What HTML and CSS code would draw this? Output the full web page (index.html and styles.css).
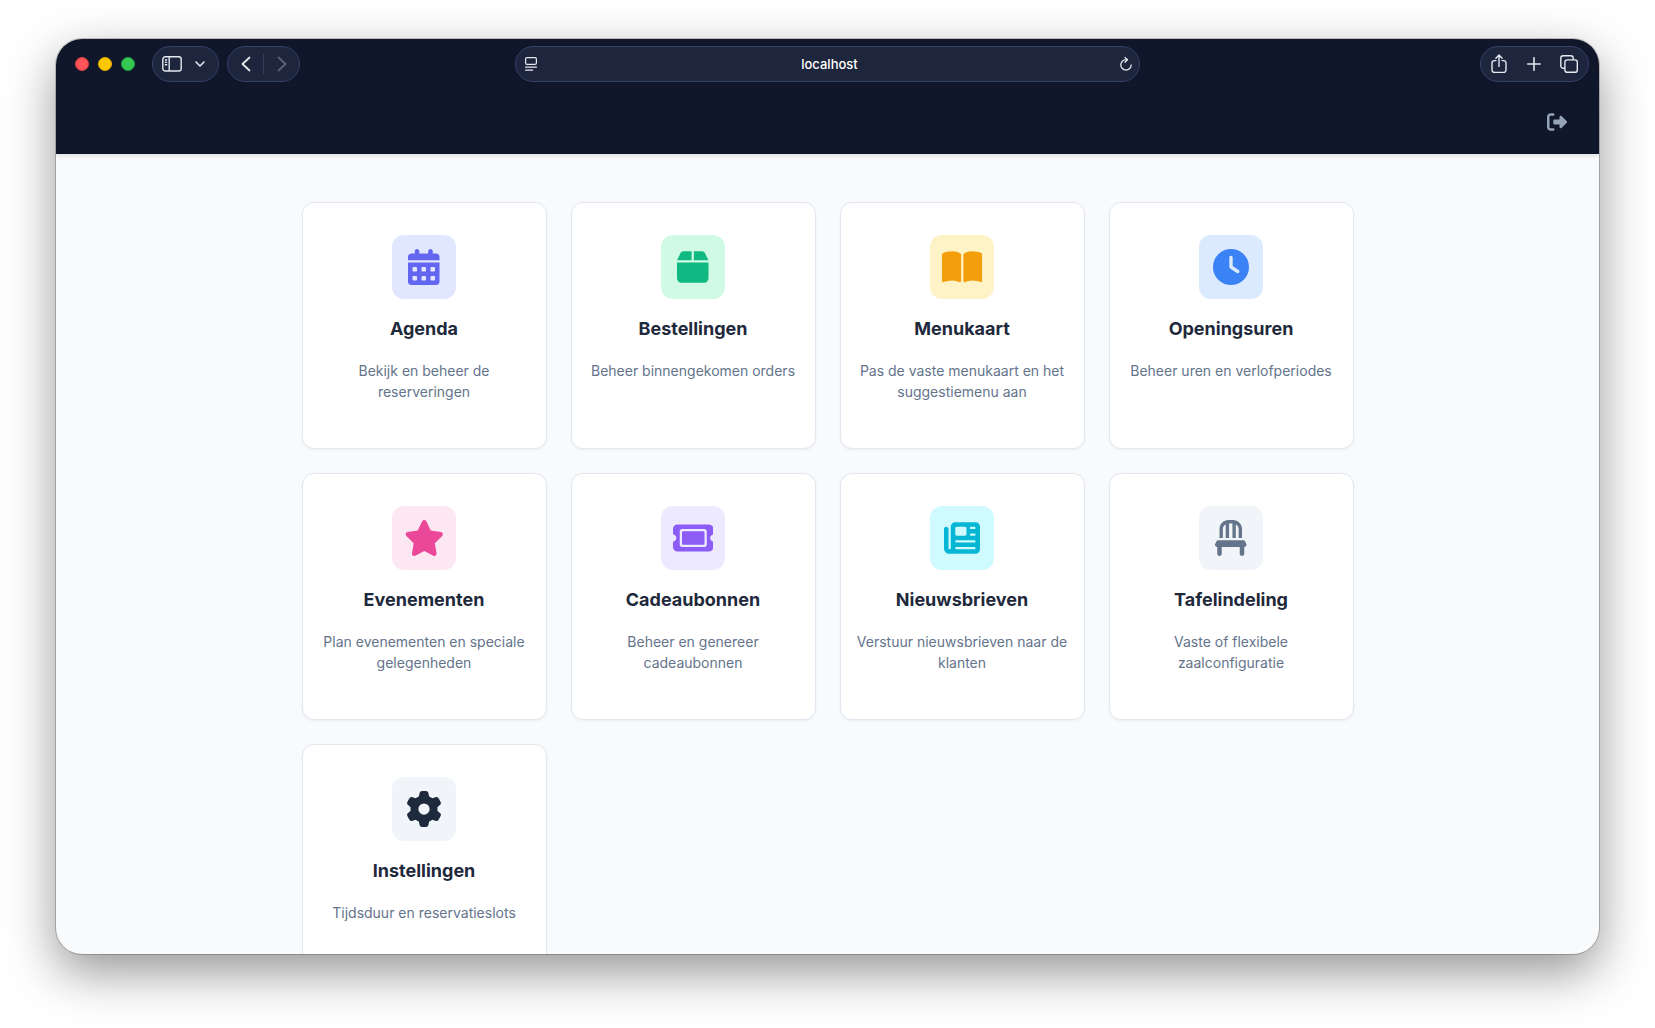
FILE: index.html
```html
<!DOCTYPE html>
<html lang="nl">
<head>
    <meta charset="UTF-8">
    <meta name="viewport" content="width=device-width, initial-scale=1.0">
    <title>Dashboard</title>
    <link rel="stylesheet" href="styles.css">
</head>
<body>
    <div class="window">
        <!-- Browser toolbar -->
        <div class="toolbar">
            <div class="toolbar-left">
                <div class="lights">
                    <span class="light red"></span>
                    <span class="light yellow"></span>
                    <span class="light green"></span>
                </div>
                <div class="pill pill-sidebar">
                    <button type="button" class="btn-sidebar" aria-label="Sidebar">
                        <svg width="20" height="16" viewBox="0 0 20 16" fill="none" stroke="currentColor" stroke-width="1.4">
                            <rect x="0.8" y="0.8" width="18.4" height="14.2" rx="2.6"/>
                            <path d="M7.2 1v14M2.8 4h2.4M2.8 6.4h2.4M2.8 8.8h2.4"/>
                        </svg>
                    </button>
                    <button type="button" class="btn-chevron" aria-label="Tab groups">
                        <svg width="10" height="6" viewBox="0 0 10 6" fill="none" stroke="currentColor" stroke-width="1.6" stroke-linecap="round" stroke-linejoin="round">
                            <path d="M1 1l4 4 4-4"/>
                        </svg>
                    </button>
                </div>
                <div class="pill pill-nav">
                    <button type="button" aria-label="Back">
                        <svg width="10" height="16" viewBox="0 0 10 16" fill="none" stroke="currentColor" stroke-width="1.8" stroke-linecap="round" stroke-linejoin="round">
                            <path d="M8.5 1.5L1.5 8l7 6.5"/>
                        </svg>
                    </button>
                    <span class="divider"></span>
                    <button type="button" class="disabled" aria-label="Forward">
                        <svg width="10" height="16" viewBox="0 0 10 16" fill="none" stroke="currentColor" stroke-width="1.8" stroke-linecap="round" stroke-linejoin="round">
                            <path d="M1.5 1.5l7 6.5-7 6.5"/>
                        </svg>
                    </button>
                </div>
            </div>

            <div class="pill address">
                <button type="button" class="btn-page" aria-label="Page menu">
                    <svg width="12" height="14" viewBox="0 0 12 14" fill="none" stroke="currentColor" stroke-width="1.2" stroke-linecap="round">
                        <rect x="0.6" y="0.6" width="10.8" height="6.8" rx="1.4"/>
                        <path d="M.6 10.2h10.8M.6 13.2h7"/>
                    </svg>
                </button>
                <input type="text" value="localhost" aria-label="Address">
                <button type="button" class="btn-reload" aria-label="Reload">
                    <svg width="12" height="16" viewBox="0 0 12 16" fill="none" stroke="currentColor" stroke-width="1.3" stroke-linecap="round" stroke-linejoin="round">
                        <path d="M6.6 3.7H6a5.2 5.2 0 1 0 5.2 5.2M5 1.4l2.5 2.4L5 6.2"/>
                    </svg>
                </button>
            </div>

            <div class="toolbar-right">
                <div class="pill pill-actions">
                    <button type="button" aria-label="Share">
                        <svg width="16" height="20" viewBox="0 0 16 20" fill="none" stroke="currentColor" stroke-width="1.4" stroke-linecap="round" stroke-linejoin="round">
                            <path d="M5 6.6H3.4A2.4 2.4 0 0 0 1 9v7a2.4 2.4 0 0 0 2.4 2.4h9.2A2.4 2.4 0 0 0 15 16V9a2.4 2.4 0 0 0-2.4-2.4H11M8 12.4V1.2M4.9 4.2L8 1.1l3.1 3.1"/>
                        </svg>
                    </button>
                    <button type="button" aria-label="New tab">
                        <svg width="14" height="14" viewBox="0 0 14 14" fill="none" stroke="currentColor" stroke-width="1.6" stroke-linecap="round">
                            <path d="M7 .8v12.4M.8 7h12.4"/>
                        </svg>
                    </button>
                    <button type="button" aria-label="Tab overview">
                        <svg width="18" height="18" viewBox="0 0 18 18" fill="none" stroke="currentColor" stroke-width="1.4">
                            <rect x="4.9" y="4.9" width="12.4" height="12.4" rx="2.4"/>
                            <path d="M4.8 13.2H3.2A2.4 2.4 0 0 1 .8 10.8V3.2A2.4 2.4 0 0 1 3.2.8h7.6a2.4 2.4 0 0 1 2.4 2.4v1.6"/>
                        </svg>
                    </button>
                </div>
            </div>
        </div>

        <!-- Site header -->
        <header>
            <a href="#logout" class="logout" aria-label="Uitloggen">
                <svg viewBox="0 0 512 512"><path d="M377.9 105.9L500.7 228.7c7.2 7.2 11.3 17.1 11.3 27.3s-4.1 20.1-11.3 27.3L377.9 406.1c-6.4 6.4-15 9.9-24 9.9c-18.7 0-33.9-15.2-33.9-33.9l0-62.1-128 0c-17.7 0-32-14.3-32-32l0-64c0-17.7 14.3-32 32-32l128 0 0-62.1c0-18.7 15.2-33.9 33.9-33.9c9 0 17.6 3.6 24 9.9zM160 96L96 96c-17.7 0-32 14.3-32 32l0 256c0 17.7 14.3 32 32 32l64 0c17.7 0 32 14.3 32 32s-14.3 32-32 32l-64 0c-53 0-96-43-96-96L0 128C0 75 43 32 96 32l64 0c17.7 0 32 14.3 32 32s-14.3 32-32 32z"/></svg>
            </a>
        </header>

        <main>
            <div class="cards">
                <a href="#agenda" class="card">
                    <div class="icon indigo">
                        <svg viewBox="0 0 448 512"><path d="M128 0c17.7 0 32 14.3 32 32V64H288V32c0-17.7 14.3-32 32-32s32 14.3 32 32V64h48c26.5 0 48 21.5 48 48v48H0V112C0 85.5 21.5 64 48 64H96V32c0-17.7 14.3-32 32-32zM0 192H448V464c0 26.5-21.5 48-48 48H48c-26.5 0-48-21.5-48-48V192zm64 80v32c0 8.8 7.2 16 16 16h32c8.8 0 16-7.2 16-16V272c0-8.8-7.2-16-16-16H80c-8.8 0-16 7.2-16 16zm128 0v32c0 8.8 7.2 16 16 16h32c8.8 0 16-7.2 16-16V272c0-8.8-7.2-16-16-16H208c-8.8 0-16 7.2-16 16zm144-16c-8.8 0-16 7.2-16 16v32c0 8.8 7.2 16 16 16h32c8.8 0 16-7.2 16-16V272c0-8.8-7.2-16-16-16H336zM64 400v32c0 8.8 7.2 16 16 16h32c8.8 0 16-7.2 16-16V400c0-8.8-7.2-16-16-16H80c-8.8 0-16 7.2-16 16zm144-16c-8.8 0-16 7.2-16 16v32c0 8.8 7.2 16 16 16h32c8.8 0 16-7.2 16-16V400c0-8.8-7.2-16-16-16H208zm112 16v32c0 8.8 7.2 16 16 16h32c8.8 0 16-7.2 16-16V400c0-8.8-7.2-16-16-16H336c-8.8 0-16 7.2-16 16z"/></svg>
                    </div>
                    <h3>Agenda</h3>
                    <p>Bekijk en beheer de reserveringen</p>
                </a>
                <a href="#bestellingen" class="card">
                    <div class="icon green-icon">
                        <svg viewBox="0 0 448 512"><path d="M50.7 58.5L0 160H208V32H93.7C75.5 32 58.9 42.3 50.7 58.5zM240 160H448L397.3 58.5C389.1 42.3 372.5 32 354.3 32H240V160zM448 192H0V416c0 35.3 28.7 64 64 64H384c35.3 0 64-28.7 64-64V192z"/></svg>
                    </div>
                    <h3>Bestellingen</h3>
                    <p>Beheer binnengekomen orders</p>
                </a>
                <a href="#menukaart" class="card">
                    <div class="icon amber">
                        <svg viewBox="0 0 576 512"><path d="M249.6 471.5c10.8 3.8 22.4-4.1 22.4-15.5V78.6c0-4.2-1.6-8.4-5-11C247.4 52 202.4 32 144 32C93.5 32 46.3 45.3 18.1 56.1C6.8 60.5 0 71.7 0 83.8V454.1c0 11.9 12.8 20.2 24.1 16.5C55.6 460.1 105.5 448 144 448c33.9 0 79 14 105.6 23.5zm76.8 0C353 462 398.1 448 432 448c38.5 0 88.4 12.1 119.9 22.6c11.3 3.8 24.1-4.6 24.1-16.5V83.8c0-12.1-6.8-23.3-18.1-27.6C529.7 45.3 482.5 32 432 32c-58.4 0-103.4 20-123 35.6c-3.3 2.6-5 6.8-5 11V456c0 11.4 11.7 19.3 22.4 15.5z"/></svg>
                    </div>
                    <h3>Menukaart</h3>
                    <p>Pas de vaste menukaart en het suggestiemenu aan</p>
                </a>
                <a href="#openingsuren" class="card">
                    <div class="icon blue">
                        <svg viewBox="0 0 512 512"><path d="M256 0a256 256 0 1 1 0 512A256 256 0 1 1 256 0zM232 120V256c0 8 4 15.5 10.7 20l96 64c11 7.4 25.9 4.4 33.3-6.7s4.4-25.9-6.7-33.3L280 243.2V120c0-13.3-10.7-24-24-24s-24 10.7-24 24z"/></svg>
                    </div>
                    <h3>Openingsuren</h3>
                    <p>Beheer uren en verlofperiodes</p>
                </a>
                <a href="#evenementen" class="card">
                    <div class="icon pink">
                        <svg viewBox="0 0 576 512"><path d="M316.9 18C311.6 7 300.4 0 288.1 0s-23.4 7-28.8 18L195 150.3 51.4 171.5c-12 1.8-22 10.2-25.7 21.7s-.7 24.2 7.9 32.7L137.8 329 113.2 474.7c-2 12 3 24.2 12.9 31.3s23 8 33.8 2.3l128.3-68.5 128.3 68.5c10.8 5.7 23.9 4.9 33.8-2.3s14.9-19.3 12.9-31.3L438.5 329 542.7 225.9c8.6-8.5 11.7-21.2 7.9-32.7s-13.7-19.9-25.7-21.7L381.2 150.3 316.9 18z"/></svg>
                    </div>
                    <h3>Evenementen</h3>
                    <p>Plan evenementen en speciale gelegenheden</p>
                </a>
                <a href="#cadeaubonnen" class="card">
                    <div class="icon violet">
                        <svg viewBox="0 0 576 512"><path d="M64 64C28.7 64 0 92.7 0 128v64c0 8.8 7.4 15.7 15.7 18.6C34.5 217.1 48 235 48 256s-13.5 38.9-32.3 45.4C7.4 304.3 0 311.2 0 320v64c0 35.3 28.7 64 64 64H512c35.3 0 64-28.7 64-64V320c0-8.8-7.4-15.7-15.7-18.6C541.5 294.9 528 277 528 256s13.5-38.9 32.3-45.4c8.3-2.9 15.7-9.8 15.7-18.6V128c0-35.3-28.7-64-64-64H64zm64 112l0 160c0 8.8 7.2 16 16 16H432c8.8 0 16-7.2 16-16V176c0-8.8-7.2-16-16-16H144c-8.8 0-16 7.2-16 16zM96 160c0-17.7 14.3-32 32-32H448c17.7 0 32 14.3 32 32V352c0 17.7-14.3 32-32 32H128c-17.7 0-32-14.3-32-32V160z"/></svg>
                    </div>
                    <h3>Cadeaubonnen</h3>
                    <p>Beheer en genereer cadeaubonnen</p>
                </a>
                <a href="#nieuwsbrieven" class="card">
                    <div class="icon cyan">
                        <svg viewBox="0 0 512 512"><path d="M96 96c0-35.3 28.7-64 64-64H448c35.3 0 64 28.7 64 64V416c0 35.3-28.7 64-64 64H80c-44.2 0-80-35.8-80-80V128c0-17.7 14.3-32 32-32s32 14.3 32 32V400c0 8.8 7.2 16 16 16s16-7.2 16-16V96zm64 24v80c0 13.3 10.7 24 24 24H296c13.3 0 24-10.7 24-24V120c0-13.3-10.7-24-24-24H184c-13.3 0-24 10.7-24 24zm208-8c0 8.8 7.2 16 16 16h48c8.8 0 16-7.2 16-16s-7.2-16-16-16H384c-8.8 0-16 7.2-16 16zm0 96c0 8.8 7.2 16 16 16h48c8.8 0 16-7.2 16-16s-7.2-16-16-16H384c-8.8 0-16 7.2-16 16zM160 304c0 8.8 7.2 16 16 16H432c8.8 0 16-7.2 16-16s-7.2-16-16-16H176c-8.8 0-16 7.2-16 16zm0 96c0 8.8 7.2 16 16 16H432c8.8 0 16-7.2 16-16s-7.2-16-16-16H176c-8.8 0-16 7.2-16 16z"/></svg>
                    </div>
                    <h3>Nieuwsbrieven</h3>
                    <p>Verstuur nieuwsbrieven naar de klanten</p>
                </a>
                <a href="#tafelindeling" class="card">
                    <div class="icon slate">
                        <svg viewBox="0 0 448 512"><path d="M248 48V256h48V58.7c23.9 13.8 40 39.7 40 69.3V256h48V128C384 57.3 326.7 0 256 0H192C121.3 0 64 57.3 64 128V256h48V128c0-29.6 16.1-55.5 40-69.3V256h48V48h48zM48 288c-12.1 0-23.2 6.8-28.6 17.7l-16 32c-5 9.9-4.4 21.7 1.4 31.1S20.9 384 32 384l0 96c0 17.7 14.3 32 32 32s32-14.3 32-32V384H352v96c0 17.7 14.3 32 32 32s32-14.3 32-32V384c11.1 0 21.4-5.7 27.2-15.2s6.4-21.2 1.4-31.1l-16-32C423.2 294.8 412.1 288 400 288H48z"/></svg>
                    </div>
                    <h3>Tafelindeling</h3>
                    <p>Vaste of flexibele zaalconfiguratie</p>
                </a>
                <a href="#instellingen" class="card">
                    <div class="icon dark">
                        <svg viewBox="0 0 512 512"><path d="M495.9 166.6c3.2 8.7 .5 18.4-6.4 24.6l-43.3 39.4c1.1 8.3 1.7 16.8 1.7 25.4s-.6 17.1-1.7 25.4l43.3 39.4c6.9 6.2 9.6 15.9 6.4 24.6c-4.4 11.9-9.7 23.3-15.8 34.3l-4.7 8.1c-6.6 11-14 21.4-22.1 31.2c-5.9 7.2-15.7 9.6-24.5 6.8l-55.7-17.7c-13.4 10.3-28.2 18.9-44 25.4l-12.5 57.1c-2 9.1-9 16.3-18.2 17.8c-13.8 2.3-28 3.5-42.5 3.5s-28.7-1.2-42.5-3.5c-9.2-1.5-16.2-8.7-18.2-17.8l-12.5-57.1c-15.8-6.5-30.6-15.1-44-25.4L83.1 425.9c-8.8 2.8-18.6 .3-24.5-6.8c-8.1-9.8-15.5-20.2-22.1-31.2l-4.7-8.1c-6.1-11-11.4-22.4-15.8-34.3c-3.2-8.7-.5-18.4 6.4-24.6l43.3-39.4C64.6 273.1 64 264.6 64 256s.6-17.1 1.7-25.4L22.4 191.2c-6.9-6.2-9.6-15.9-6.4-24.6c4.4-11.9 9.7-23.3 15.8-34.3l4.7-8.1c6.6-11 14-21.4 22.1-31.2c5.9-7.2 15.7-9.6 24.5-6.8l55.7 17.7c13.4-10.3 28.2-18.9 44-25.4l12.5-57.1c2-9.1 9-16.3 18.2-17.8C227.3 1.2 241.5 0 256 0s28.7 1.2 42.5 3.5c9.2 1.5 16.2 8.7 18.2 17.8l12.5 57.1c15.8 6.5 30.6 15.1 44 25.4l55.7-17.7c8.8-2.8 18.6-.3 24.5 6.8c8.1 9.8 15.5 20.2 22.1 31.2l4.7 8.1c6.1 11 11.4 22.4 15.8 34.3zM256 336a80 80 0 1 0 0-160 80 80 0 1 0 0 160z"/></svg>
                    </div>
                    <h3>Instellingen</h3>
                    <p>Tijdsduur en reservatieslots</p>
                </a>
            </div>
        </main>
    </div>
</body>
</html>
```
FILE: styles.css
```css
* {
    box-sizing: border-box;
}

body {
    font-family: Inter, "Liberation Sans", sans-serif;
    margin: 0;
    padding: 39px 56px 74px;
    height: 100vh;
    background-color: #ffffff;
}

.window {
    display: flex;
    flex-direction: column;
    height: 100%;
    border-radius: 26px;
    overflow: hidden;
    background-color: #f8fafc;
    box-shadow: 0 0 0 1px rgba(0, 0, 0, 0.2), 0 18px 50px rgba(0, 0, 0, 0.42);
}

/* Browser toolbar */
.toolbar {
    display: grid;
    grid-template-columns: 1fr 625px 1fr;
    align-items: center;
    height: 50px;
    flex-shrink: 0;
    padding: 0 10px;
    background-color: #10172a;
}

.toolbar-left {
    display: flex;
    align-items: center;
    gap: 8px;
    padding-left: 9px;
}

.toolbar-right {
    display: flex;
    justify-content: flex-end;
}

.lights {
    display: flex;
    gap: 9px;
    margin-right: 9px;
}

.light {
    width: 14px;
    height: 14px;
    border-radius: 50%;
}

.red {
    background-color: #ff5558;
    border: 1px solid #dd3c43;
}

.yellow {
    background-color: #fdc800;
    border: 1px solid #e0ae08;
}

.green {
    background-color: #33c755;
    border: 1px solid #25a53f;
}

.pill {
    display: flex;
    align-items: center;
    height: 36px;
    border: 1px solid #344168;
    border-radius: 18px;
    background-color: #1e263d;
}

.pill button {
    display: flex;
    align-items: center;
    justify-content: center;
    flex: 1;
    height: 100%;
    padding: 0;
    border: none;
    background: none;
    color: #e6e8ef;
    cursor: pointer;
}

.pill-sidebar {
    width: 67px;
    padding-right: 9px;
}

.pill .btn-sidebar {
    flex: 2;
}

.pill-nav {
    width: 73px;
}

.pill-actions {
    width: 109px;
    padding-right: 1px;
}

.pill .disabled {
    color: #5c6278;
}

.divider {
    width: 1px;
    height: 20px;
    background-color: #353c55;
}

.address .btn-page {
    flex: 0 0 30px;
}

.address .btn-reload {
    flex: 0 0 26px;
}

.address input {
    flex: 1;
    min-width: 0;
    padding: 0;
    border: none;
    outline: none;
    background: none;
    color: #ffffff;
    font-family: inherit;
    font-size: 13px;
    font-weight: 500;
    text-align: center;
}

/* Site header */
header {
    display: flex;
    align-items: center;
    justify-content: flex-end;
    height: 65px;
    flex-shrink: 0;
    padding: 0 32px;
    background-color: #10172a;
    box-shadow: 0 2px 4px rgba(0, 0, 0, 0.1);
    z-index: 1;
}

.logout {
    display: flex;
    color: #94a3b8;
}

.logout svg {
    width: 20px;
    height: 20px;
    fill: currentColor;
}

main {
    flex: 1;
    min-height: 0;
    overflow-y: auto;
    scrollbar-width: none;
    padding: 48px 24px;
}

.cards {
    display: grid;
    grid-template-columns: repeat(4, 1fr);
    grid-auto-rows: 247px;
    gap: 24px;
    max-width: 1052px;
    margin: 0 auto;
}

.card {
    display: flex;
    flex-direction: column;
    align-items: center;
    padding: 32px 12px;
    border: 1px solid #e2e8f0;
    border-radius: 12px;
    background-color: #ffffff;
    box-shadow: 0 1px 3px rgba(0, 0, 0, 0.05);
    text-align: center;
    text-decoration: none;
}

.card:hover {
    box-shadow: 0 6px 16px rgba(0, 0, 0, 0.1);
}

.card h3 {
    margin: 16px 0 18px;
    font-size: 18px;
    line-height: 27px;
    font-weight: 700;
    color: #1e293b;
}

.card p {
    margin: 0;
    font-size: 14px;
    line-height: 21px;
    color: #64748b;
}

.icon {
    display: flex;
    align-items: center;
    justify-content: center;
    width: 64px;
    height: 64px;
    border-radius: 12px;
}

.icon svg {
    height: 36px;
    fill: currentColor;
}

.indigo {
    background-color: #e0e7ff;
    color: #6366f1;
}

.green-icon {
    background-color: #d1fae5;
    color: #10b981;
}

.amber {
    background-color: #fef3c7;
    color: #f59e0b;
}

.blue {
    background-color: #dbeafe;
    color: #3b82f6;
}

.pink {
    background-color: #fce7f3;
    color: #ec4899;
}

.violet {
    background-color: #ede9fe;
    color: #8b5cf6;
}

.cyan {
    background-color: #cffafe;
    color: #06b6d4;
}

.slate {
    background-color: #f1f5f9;
    color: #64748b;
}

.dark {
    background-color: #f1f5f9;
    color: #1e293b;
}
```
